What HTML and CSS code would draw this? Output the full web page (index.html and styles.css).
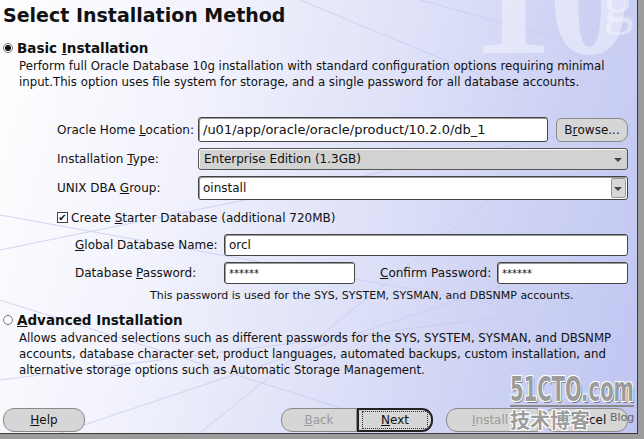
FILE: index.html
```html
<!DOCTYPE html>
<html>
<head>
<meta charset="utf-8">
<link rel="stylesheet" href="styles.css">
</head>
<body>
<div class="frame">
  <div class="panel">
    <svg class="deco" width="637" height="433" viewBox="0 0 637 433">
      <g stroke="#c9cdef" stroke-width="1" fill="none" opacity="0.8">
        <line x1="0" y1="215" x2="637" y2="330"/>
        <line x1="0" y1="250" x2="637" y2="120"/>
        <line x1="60" y1="433" x2="637" y2="240"/>
        <line x1="0" y1="380" x2="637" y2="300"/>
        <line x1="200" y1="433" x2="637" y2="80"/>
        <line x1="0" y1="300" x2="420" y2="433"/>
        <line x1="300" y1="0" x2="637" y2="140"/>
        <line x1="420" y1="0" x2="637" y2="60"/>
      </g>
    </svg>
    <div class="tenG">10</div>
    <div class="gMark">g</div>

    <h1 class="title">Select Installation Method</h1>

    <section class="option">
      <div class="radio-row"><span class="radio checked"></span><span class="opt-title">Basic <u>I</u>nstallation</span></div>
      <p class="desc">Perform full Oracle Database 10g installation with standard configuration options requiring minimal<br>input.This option uses file system for storage, and a single password for all database accounts.</p>
    </section>

    <div class="form">
      <div class="row r1">
        <span class="lbl">Oracle Home <u>L</u>ocation:</span>
        <span class="field home">/u01/app/oracle/oracle/product/10.2.0/db_1</span>
        <span class="btn browse">B<u>r</u>owse...</span>
      </div>
      <div class="row r2">
        <span class="lbl">Installation <u>T</u>ype:</span>
        <span class="select">Enterprise Edition (1.3GB)<span class="caret"></span></span>
      </div>
      <div class="row r3">
        <span class="lbl">UNIX DBA <u>G</u>roup:</span>
        <span class="field combo">oinstall<span class="combo-btn"><span class="caret"></span></span></span>
      </div>
      <div class="check-row"><span class="checkbox">✔</span><span>Create <u>S</u>tarter Database (additional 720MB)</span></div>
      <div class="sub">
        <div class="row">
          <span class="lbl2"><u>G</u>lobal Database Name:</span>
          <span class="field gname">orcl</span>
        </div>
        <div class="row">
          <span class="lbl2">Database <u>P</u>assword:</span>
          <span class="field pw">******</span>
          <span class="lbl3"><u>C</u>onfirm Password:</span>
          <span class="field pw">******</span>
        </div>
      </div>
      <p class="note">This password is used for the SYS, SYSTEM, SYSMAN, and DBSNMP accounts.</p>
    </div>

    <section class="option adv">
      <div class="radio-row"><span class="radio"></span><span class="opt-title"><u>A</u>dvanced Installation</span></div>
      <p class="desc">Allows advanced selections such as different passwords for the SYS, SYSTEM, SYSMAN, and DBSNMP<br>accounts, database character set, product languages, automated backups, custom installation, and<br>alternative storage options such as Automatic Storage Management.</p>
    </section>

    <div class="buttons">
      <span class="btn help"><u>H</u>elp</span>
      <span class="spacer"></span>
      <span class="btn back disabled"><u>B</u>ack</span>
      <span class="btn next"><span class="focus"><u>N</u>ext</span></span>
      <span class="btn install disabled"><u>I</u>nstall</span>
      <span class="btn cancel">Cancel</span>
    </div>

    <div class="mark">
      <div class="mark-top">51CTO.com</div>
      <div class="mark-bottom"><span class="cn">技术博客</span><span class="blog">Blog</span></div>
    </div>
  </div>
</div>
</body>
</html>
```

FILE: styles.css
```css
* { box-sizing: border-box; }
html, body { margin: 0; padding: 0; }
body {
  width: 644px;
  height: 439px;
  overflow: hidden;
  background: #9c9c9c;
  font-family: "DejaVu Sans", sans-serif;
  font-size: 12px;
  color: #111;
}
u { text-decoration: underline; text-underline-offset: 1px; }
.frame {
  width: 638px;
  height: 434px;
  border-right: 1px solid #3a3a3a;
  border-bottom: 1px solid #3a3a3a;
}
.panel {
  position: relative;
  width: 637px;
  height: 433px;
  overflow: hidden;
  padding: 3px 0 0 3px;
  background: linear-gradient(105deg, #ffffff 0%, #f1f2fc 30%, #dfe2f8 55%, #cdd2f4 78%, #bfc5f1 100%);
}
.deco { position: absolute; left: 0; top: 0; }
.tenG {
  position: absolute;
  left: 470px;
  top: -85px;
  font-family: "Liberation Serif", serif;
  font-weight: bold;
  font-size: 165px;
  line-height: 1;
  color: rgba(255,255,255,0.4);
  letter-spacing: -4px;
}
.gMark {
  position: absolute;
  left: 603px;
  top: -30px;
  font-family: "Liberation Serif", serif;
  font-size: 62px;
  line-height: 1;
  color: rgba(255,255,255,0.4);
}
.title {
  position: relative;
  margin: 0;
  font-size: 19px;
  font-weight: bold;
  line-height: 24px;
  color: #111;
}
.option { position: relative; margin-top: 12px; }
.radio-row { display: flex; align-items: center; gap: 4px; height: 18px; }
.radio {
  width: 10px; height: 10px; border-radius: 50%;
  border: 1px solid #777;
  background: #fff;
  display: inline-flex; align-items: center; justify-content: center;
}
.radio.checked::after {
  content: ""; width: 6px; height: 6px; border-radius: 50%; background: #111;
}
.opt-title { font-size: 13.5px; font-weight: bold; color: #111; }
.desc { margin: 1px 0 0 16px; line-height: 16px; font-size: 11.75px; }
.form {
  position: relative;
  display: flex; flex-direction: column;
  margin: 27px 0 0 54px; width: 571px;
}
.row { display: flex; align-items: center; }
.r1, .r2 { margin-bottom: 6px; }
.lbl { width: 141px; }
.field {
  background: #fff;
  border: 1px solid #444;
  border-radius: 3px;
  box-shadow: inset 1px 1px 0 #999;
  height: 24px;
  display: flex; align-items: center;
  padding-left: 4px;
  font-size: 12px;
}
.home { width: 350px; height: 25px; font-size: 13px; }
.btn {
  display: inline-flex; align-items: center; justify-content: center;
  background: #d6d6d6;
  border: 1px solid #8a8a8a;
  border-radius: 11px;
  height: 24px;
  color: #111;
}
.browse { width: 72px; margin-left: 8px; border-radius: 5px 9px 9px 5px; }
.select {
  position: relative;
  width: 430px; height: 22px;
  background: #d2d2d2;
  border: 1px solid #555;
  border-radius: 3px;
  box-shadow: inset 1px 1px 0 #fafafa;
  display: flex; align-items: center; padding-left: 5px;
  font-size: 12px;
}
.caret {
  position: absolute; right: 5px; top: 9px;
  width: 0; height: 0;
  border-left: 4px solid transparent;
  border-right: 4px solid transparent;
  border-top: 4px solid #444;
}
.combo { position: relative; width: 430px; }
.combo-btn {
  position: absolute; right: 1px; top: 1px; bottom: 1px; width: 15px;
  background: #d8d8d8; border: 1px solid #999; border-radius: 2px;
}
.combo-btn .caret { right: 3px; top: 8px; }
.check-row { display: flex; align-items: center; gap: 3px; margin-top: 10px; height: 15px; }
.checkbox {
  width: 11px; height: 11px; border: 1px solid #444; background: #fff;
  font-size: 10px; line-height: 9px; text-align: center; color: #111;
}
.sub { display: flex; flex-direction: column; gap: 6px; margin: 9px 0 0 18px; }
.lbl2 { width: 149px; }
.gname { width: 404px; height: 22px; }
.pw { width: 131px; height: 22px; font-size: 10px; }
.lbl3 { margin-left: 25px; width: 117px; }
.note { margin: 5px 0 0 93px; line-height: 14px; font-size: 11px; }
.adv { margin-top: 8px; }
.buttons { position: relative; display: flex; align-items: center; margin-top: 30px; width: 625px; }
.help { width: 82px; }
.spacer { flex: 1; }
.back { width: 76px; border-radius: 11px 0 0 11px; }
.next { width: 76px; border: 2px solid #222; border-radius: 0 11px 11px 0; }
.focus { border: 1px dotted #333; padding: 1px 10px; width: 66px; text-align: center; }
.install { width: 92px; margin-left: 13px; border-radius: 11px 0 0 11px; justify-content: flex-start; padding-left: 25px; }
.cancel { width: 84px; margin-left: 6px; }
.disabled { color: #9a9a9a; }
.mark {
  position: absolute; left: 510px; top: 374px;
  width: 126px;
}
.mark-top {
  font-family: "DejaVu Sans Condensed", "DejaVu Sans", sans-serif;
  font-weight: bold;
  font-size: 34px; line-height: 30px;
  color: #9c9c9c;
  white-space: nowrap;
  text-shadow: 1px 1px 0 #fff, -1px -1px 0 #fff, 1px -1px 0 #fff, -1px 1px 0 #fff, 2px 2px 0 #777;
  transform: scaleX(0.64);
  transform-origin: left;
}
.mark-bottom {
  display: flex; align-items: flex-start;
  border-top: 2px solid #8a8a8a;
  margin-top: 1px;
  width: 124px;
}
.cn {
  flex-shrink: 0;
  white-space: nowrap;
  font-family: "Noto Sans CJK SC", sans-serif;
  font-size: 20px; font-weight: bold; line-height: 26px;
  color: #9c9c9c;
  text-shadow: 1px 1px 0 #fff, -1px -1px 0 #fff, 1px -1px 0 #fff, -1px 1px 0 #fff;
}
.blog { flex-shrink: 0; font-size: 11px; color: #666; margin-left: 20px; margin-top: 4px; }
```
